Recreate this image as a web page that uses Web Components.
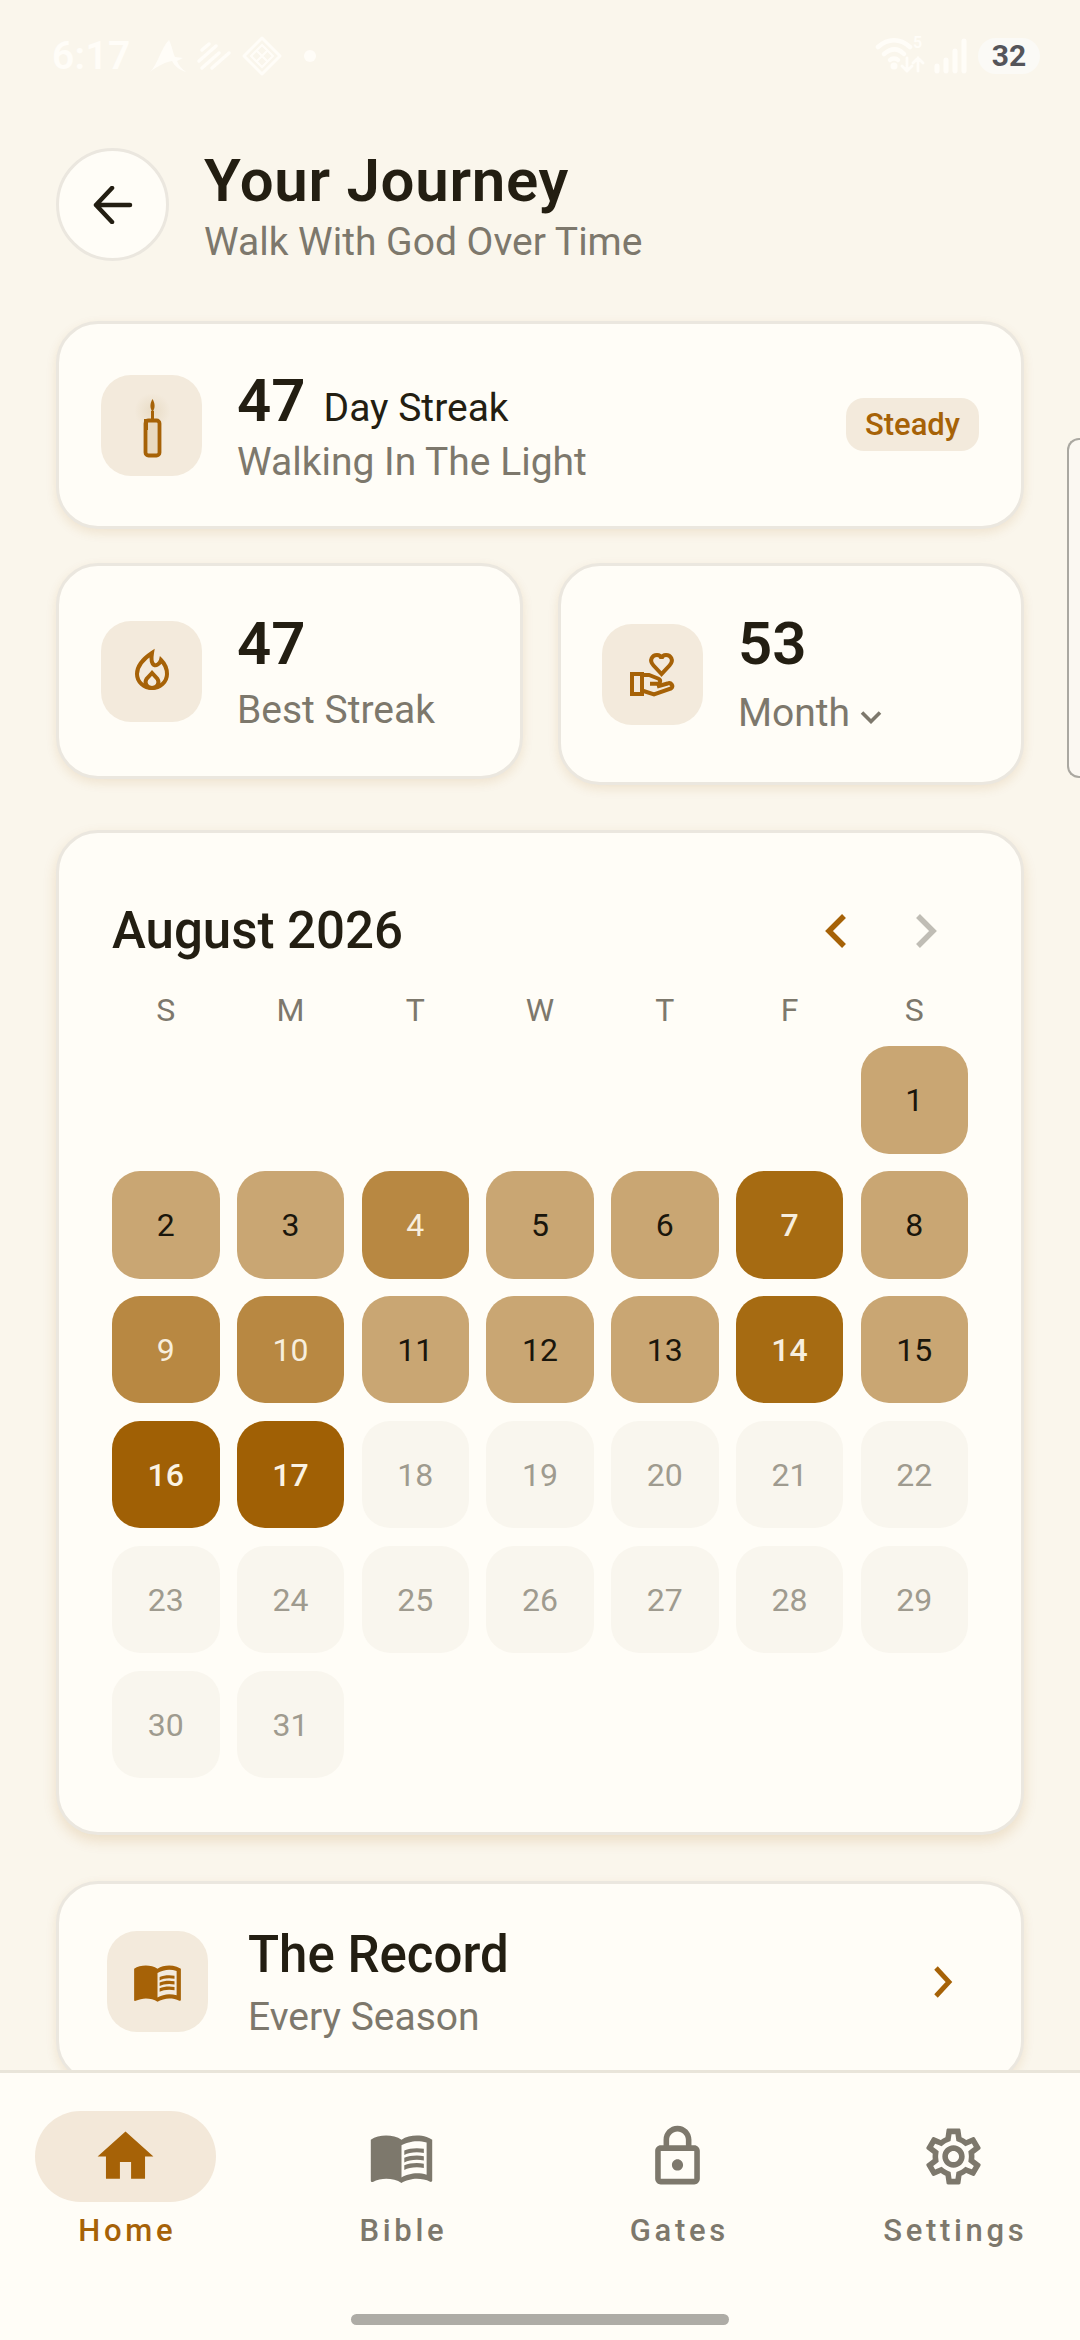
<!DOCTYPE html>
<html lang="en">
<head>
<meta charset="utf-8">
<title>Your Journey</title>
<style>
html,body{margin:0;padding:0;background:#faf6ec}
</style>
</head>
<body>
<app-shell>
  <status-bar slot="status"></status-bar>
  <page-header><span slot="title">Your Journey</span><span slot="sub">Walk With God Over Time</span></page-header>
  <section-stack>
    <stat-card variant="wide">
      <icon-tile slot="icon"><svg viewBox="0 0 100 100" width="100" height="100"><defs><radialGradient id="glow"><stop offset="0" stop-color="#e9dcc6"/><stop offset="1" stop-color="#e9dcc6" stop-opacity="0"/></radialGradient></defs><circle cx="50.500" cy="36" r="18" fill="url(#glow)"/><rect x="43.500" y="45.500" width="14" height="35" rx="3" fill="#e8d9c0" stroke="#a66207" stroke-width="3.800"/><rect x="42" y="44" width="4" height="11" fill="#a66207"/><path d="M50.500 24c2.500 4 3 9 0 13c-3-4-2.500-9 0-13z" fill="#a66207"/><rect x="49" y="36" width="3" height="9" fill="#a66207"/></svg></icon-tile>
      <span slot="value">47</span><span slot="unit">Day Streak</span>
      <span slot="label">Walking In The Light</span>
      <status-chip slot="end">Steady</status-chip>
    </stat-card>
    <stat-row>
      <stat-card>
        <icon-tile slot="icon"><svg viewBox="0 0 100 100" width="100" height="100" fill="none" stroke="#a66207" stroke-width="4" stroke-linejoin="miter"><path d="M50 32C41 38 35 45 35 53C35 61 42 67 50 67C58 67 65 61 65 53C65 47 63 43 59 39C58 43 54 45 52 44C49 42 49 38 50 32Z"/><path d="M50 52L44.500 58C42 62 45 67 50 67C55 67 58 62 55.500 58Z"/></svg></icon-tile>
        <span slot="value">47</span>
        <span slot="label">Best Streak</span>
      </stat-card>
      <stat-card variant="drop">
        <icon-tile slot="icon"><svg viewBox="0 0 100 100" width="100" height="100" fill="none" stroke="#a66207" stroke-width="4"><path d="M58.500 50L50.500 41.500C45.500 36 49.500 31 54 31C56 31 58 32.500 58.500 34.500C59 32.500 61 31 63 31C67.500 31 71.500 36 66.500 41.500Z"/><path d="M29 50H39V70H29Z"/><path d="M39 51H46L55 54.500C58.500 56 57.500 60 53.500 59.800H47"/><path d="M39 66.500L51 70.500L68 64.500C71 62 68 58 64.500 59.500L54 62.500"/></svg></icon-tile>
        <span slot="value">53</span>
        <span slot="label">Month<svg width="24" height="14" viewBox="0 0 24 14" fill="none" stroke="#7d786c" stroke-width="3.600" style="margin-left:9px;vertical-align:2px"><path d="M3 2.500L12 11.500L21 2.500"/></svg></span>
      </stat-card>
    </stat-row>
    <journey-calendar></journey-calendar>
    <record-card><span slot="title">The Record</span><span slot="sub">Every Season</span></record-card>
  </section-stack>
  <bottom-nav slot="nav">
    <nav-item icon="home" active>Home</nav-item>
    <nav-item icon="book">Bible</nav-item>
    <nav-item icon="lock">Gates</nav-item>
    <nav-item icon="gear">Settings</nav-item>
  </bottom-nav>
</app-shell>
<script>
const ACCENT='#a66207',INK='#231e12',MUTED='#7d786c';
const PATHS={
home:'M10 20v-6h4v6h5v-8h3L12 3 2 12h3v8z',
book:'M21 5c-1.11-.35-2.33-.5-3.5-.5-1.95 0-4.05.4-5.5 1.5-1.45-1.1-3.55-1.5-5.5-1.5S2.450 4.900 1 6v14.650c0 .25.25.5.5.5.1 0 .15-.05.25-.05C3.100 20.450 5.050 20 6.500 20c1.950 0 4.050.4 5.500 1.500 1.350-.85 3.800-1.500 5.500-1.500 1.650 0 3.350.3 4.750 1.050.1.05.15.05.25.05.25 0 .5-.25.5-.5V6c-.6-.45-1.250-.75-2-1zm0 13.500c-1.100-.35-2.300-.5-3.500-.5-1.700 0-4.150.65-5.500 1.500V8c1.350-.85 3.800-1.500 5.500-1.500 1.200 0 2.400.15 3.500.5v11.500zM17.500 10.500c.88 0 1.730.09 2.500.26V9.240c-.79-.15-1.640-.24-2.500-.24-1.700 0-3.240.29-4.500.83v1.660c1.130-.64 2.700-.99 4.500-.99zM13 12.490v1.660c1.130-.64 2.700-.99 4.500-.99.88 0 1.730.09 2.500.26V11.900c-.79-.15-1.640-.24-2.500-.24-1.700 0-3.240.3-4.500.83zM17.500 14.330c-1.700 0-3.240.29-4.500.83v1.660c1.130-.64 2.700-.99 4.500-.99.88 0 1.730.09 2.500.26v-1.520c-.79-.16-1.640-.24-2.500-.24z',
lock:'M18 8h-1V6c0-2.760-2.240-5-5-5S7 3.240 7 6v2H6c-1.100 0-2 .9-2 2v10c0 1.100.9 2 2 2h12c1.100 0 2-.9 2-2V10c0-1.100-.9-2-2-2zM9 6c0-1.660 1.340-3 3-3s3 1.340 3 3v2H9V6zm9 14H6V10h12v10zm-6-3c1.100 0 2-.9 2-2s-.9-2-2-2-2 .9-2 2 .9 2 2 2z',
gear:'M19.430 12.980c.04-.32.07-.64.07-.98 0-.34-.03-.66-.07-.98l2.110-1.650c.19-.15.24-.42.12-.64l-2-3.460c-.09-.16-.26-.25-.44-.25-.06 0-.12.01-.17.03l-2.490 1c-.52-.4-1.080-.73-1.690-.98l-.38-2.650C14.460 2.180 14.250 2 14 2h-4c-.25 0-.46.18-.49.42l-.38 2.650c-.61.25-1.170.59-1.690.98l-2.490-1c-.06-.02-.12-.03-.18-.03-.17 0-.34.09-.43.25l-2 3.460c-.13.22-.07.49.12.64l2.110 1.650c-.04.32-.07.65-.07.98 0 .33.03.66.07.98l-2.110 1.650c-.19.15-.24.42-.12.64l2 3.460c.09.16.26.25.44.25.06 0 .12-.01.17-.03l2.490-1c.52.4 1.080.73 1.690.98l.38 2.650c.03.24.24.42.49.42h4c.25 0 .46-.18.49-.42l.38-2.650c.61-.25 1.170-.59 1.690-.98l2.490 1c.06.02.12.03.18.03.17 0 .34-.09.43-.25l2-3.460c.12-.22.07-.49-.12-.64l-2.110-1.650zm-1.980-1.710c.04.31.05.52.05.73 0 .21-.02.43-.05.73l-.14 1.130.89.7 1.080.84-.7 1.210-1.270-.51-1.040-.42-.9.68c-.43.32-.84.56-1.250.73l-1.060.43-.16 1.130-.2 1.350h-1.400l-.19-1.350-.16-1.130-1.060-.43c-.43-.18-.83-.41-1.230-.71l-.91-.7-1.060.43-1.270.51-.7-1.210 1.080-.84.89-.7-.14-1.130c-.03-.31-.05-.54-.05-.74s.02-.43.05-.73l.14-1.130-.89-.7-1.080-.84.7-1.210 1.270.51 1.040.42.9-.68c.43-.32.84-.56 1.250-.73l1.060-.43.16-1.130.2-1.350h1.390l.19 1.350.16 1.130 1.060.43c.43.18.83.41 1.230.71l.91.7 1.060-.43 1.270-.51.7 1.210-1.070.85-.89.7.14 1.130zM12 8c-2.210 0-4 1.790-4 4s1.790 4 4 4 4-1.790 4-4-1.790-4-4-4zm0 6c-1.100 0-2-.9-2-2s.9-2 2-2 2 .9 2 2-.9 2-2 2z'
};
function svgIcon(name,size,color){return `<svg width="${size}" height="${size}" viewBox="0 0 24 24" fill="${color}" style="display:block"><path d="${PATHS[name]}"/></svg>`}
function def(tag,css,html,extra){
  const t=document.createElement('template');
  t.innerHTML=`<style>${css}</style>${html}`;
  class C extends HTMLElement{
    constructor(){super();this.attachShadow({mode:'open'}).appendChild(t.content.cloneNode(true));}
    connectedCallback(){if(extra)extra.call(this,this.shadowRoot)}
  }
  customElements.define(tag,C);
}
const cardCss=`background:#fffdf7;border:3px solid #ebe7df;box-sizing:border-box;box-shadow:0 4px 11px rgba(166,98,7,.12);`;

def('app-shell',`
:host{display:flex;flex-direction:column;width:1080px;height:2340px;overflow:hidden;position:relative;background:#faf6ec;font-family:Roboto,"Liberation Sans",sans-serif;color:${INK}}
main{flex:1;min-height:0;overflow:hidden;display:flex;flex-direction:column;padding:34px 56px 0}
.handle{position:absolute;right:0;top:438px;width:13px;height:340px;box-sizing:border-box;border:2px solid #aaa8a1;border-right:0;border-radius:12px 0 0 12px;background:#fbf8f2}
`,`<slot name="status"></slot><main><slot></slot></main><slot name="nav"></slot><div class="handle"></div>`);

def('status-bar',`
:host{display:flex;align-items:center;justify-content:space-between;height:112px;padding:0 40px 0 52px;box-sizing:border-box;flex:none;color:#fffdf8}
.l,.r{display:flex;align-items:center}
.t{font-size:39px;font-weight:600;letter-spacing:.3px;line-height:46px}
.l svg{margin-left:14px;display:block}
.r svg{display:block}
.rwrap{position:relative;width:93px;height:40px}
.five{position:absolute;left:38px;top:-2px;font-size:16px;line-height:18px;font-weight:600}
.pill{margin-left:10px;width:62px;height:36px;border-radius:18px;background:#fbfaf6;color:#55555a;font-size:30px;font-weight:700;line-height:36px;text-align:center}
`,`<div class="l"><span class="t">6:17</span>
<svg width="176" height="42" viewBox="0 0 176 42" fill="none" stroke="#fffdf8"><path d="M5 37C13 29 16 13 24 5C27 11 28 18 30 22L38 23L32 26C34 31 37 34 41 37C35 35 30 32 27 26C21 27 12 31 5 37Z" fill="#fffdf8" stroke="none"/><path d="M57 14l7-6M54 25l17-15M57 32l17-15M67 32l17-15" stroke-width="3.500" stroke-linecap="round" transform="translate(0,1)"/><path d="M117 3L135 21L117 39L99 21Z" stroke-width="3" stroke-linejoin="round"/><path d="M117 10L128 21L117 32L106 21Z" stroke-width="2"/><path d="M111 15L123 27M123 15L111 27" stroke-width="2"/><circle cx="165" cy="21" r="6" fill="#fffdf8" stroke="none"/></svg></div>
<div class="r"><div class="rwrap"><svg width="93" height="40" viewBox="0 0 93 40" fill="none" stroke="#fffdf8" stroke-linecap="round"><path d="M3 11C13 2 25 2 35 11" stroke-width="4.500"/><path d="M9 18C16 12 23 12 29 18" stroke-width="4.500"/><path d="M15 24C17 22 21 22 23 24" stroke-width="4.500"/><circle cx="19" cy="30" r="3.500" fill="#fffdf8" stroke="none"/><path d="M32 22V35M27 30L32 35L37 30M43 35V22M38 27L43 22L48 27" stroke-width="2.800"/><path d="M62 30V35M71 24V35M80 15V35M89 5V35" stroke-width="5"/></svg><span class="five">5</span></div><div class="pill">32</div></div>`);

def('page-header',`
:host{display:flex;align-items:flex-start;gap:35px;flex:none}
button{all:unset;box-sizing:border-box;flex:none;width:113px;height:113px;margin-top:2px;border-radius:50%;background:#fffdf7;border:3px solid #ebe7df;display:flex;align-items:center;justify-content:center}
.h{font-size:60px;font-weight:600;line-height:70px;letter-spacing:.7px;color:${INK}}
.s{font-size:39px;line-height:46px;margin-top:3px;color:${MUTED}}
`,`<button aria-label="Back"><svg width="40" height="38" viewBox="0 0 40 38" fill="none" stroke="${INK}" stroke-width="4.500" stroke-linecap="round" stroke-linejoin="round"><path d="M37 19H3M19 2L3 19L19 36"/></svg></button>
<div><div class="h"><slot name="title"></slot></div><div class="s"><slot name="sub"></slot></div></div>`);

def('section-stack',`:host{display:block;margin-top:56px}`,`<slot></slot>`);
def('stat-row',`:host{display:grid;grid-template-columns:1fr 1fr;gap:35px;align-items:start;margin-top:34px}`,`<slot></slot>`);

def('stat-card',`
:host{display:flex;align-items:center;gap:35px;${cardCss}border-radius:42px;padding:43px 42px}
:host([variant=wide]){padding:41px 42px}
:host([variant=drop]){padding-left:41.5px}
.tx{flex:1;min-width:0}
.top{display:flex;align-items:baseline;gap:18px}
:host([variant=wide]) .top{padding-top:1px}
.v{font-size:60px;font-weight:600;line-height:70px;color:${INK}}
.u{font-size:39px;line-height:44px;color:${INK}}
.l{font-size:39px;line-height:46px;color:${MUTED};margin-top:8px}
:host([variant=wide]) .l{margin-top:3px}
:host([variant=drop]) .l{padding:3px 0;margin-top:8px}
`,`<slot name="icon"></slot><div class="tx"><div class="top"><span class="v"><slot name="value"></slot></span><span class="u"><slot name="unit"></slot></span></div><div class="l"><slot name="label"></slot></div></div><slot name="end"></slot>`);

def('icon-tile',`:host{display:block;flex:none;width:101px;height:101px;border-radius:30px;background:#f3eadc;box-sizing:border-box}
.w{width:100%;height:100%;display:flex;align-items:center;justify-content:center}`,`<div class="w"><slot></slot></div>`);

def('status-chip',`:host{display:block;flex:none;background:#f3eadc;color:${ACCENT};font-size:31px;font-weight:500;line-height:53px;height:53px;padding:0 19px;border-radius:18px;margin-top:-2px}`,`<slot></slot>`);

def('day-cell',`
:host{display:flex;align-items:center;justify-content:center;aspect-ratio:1;border-radius:28px;font-size:32px;font-weight:450;line-height:1}
:host([k=a]){background:#c9a673;color:#1a160c}
:host([k=b]){background:#b88842;color:#f7eedd;font-weight:400}
:host([k=c]){background:#a66b12;color:#f7eedd;font-weight:500}
:host([k=d]){background:#a06005;color:#fbf3e3;font-weight:500}
:host([k=f]){background:#f9f6ee;color:#9f9b8f;font-weight:400}
:host([k=e]){background:transparent}
`,`<slot></slot>`);

def('journey-calendar',`
:host{display:block;${cardCss}border-radius:42px;padding:53px 53px 54px;margin-top:45px;box-shadow:0 6px 14px rgba(166,98,7,.16)}
.hd{display:flex;align-items:center;justify-content:space-between;height:90px}
h2{margin:0;font-size:51px;font-weight:500;color:${INK};line-height:60px}
.nav{display:flex;gap:68px;margin-right:31px}
svg{display:block}
.g{display:grid;grid-template-columns:repeat(7,1fr);column-gap:17.2px}
.w{margin-top:15px;font-size:32px;line-height:39px;color:${MUTED};text-align:center}
.d{margin-top:16px;row-gap:17.4px}
`,`<div class="hd"><h2>August 2026</h2><div class="nav"><svg width="22" height="34" viewBox="0 0 22 34" fill="none" stroke="${ACCENT}" stroke-width="5.500"><path d="M19 2L4 17L19 32"/></svg><svg width="22" height="34" viewBox="0 0 22 34" fill="none" stroke="#c0bdb5" stroke-width="5.500"><path d="M3 2L18 17L3 32"/></svg></div></div>
<div class="g w"><span>S</span><span>M</span><span>T</span><span>W</span><span>T</span><span>F</span><span>S</span></div><div class="g d" id="d"></div>`,function(r){
  const g=r.getElementById('d');if(g.children.length)return;
  const map={4:'b',9:'b',10:'b',7:'c',14:'c',16:'d',17:'d'};
  for(let i=0;i<6;i++){const c=document.createElement('day-cell');c.setAttribute('k','e');g.appendChild(c)}
  for(let n=1;n<=31;n++){const c=document.createElement('day-cell');c.setAttribute('k',n>17?'f':(map[n]||'a'));c.textContent=n;g.appendChild(c)}
});

def('record-card',`
:host{display:flex;align-items:center;gap:40px;${cardCss}border-radius:42px;padding:39px 68px 40px 48px;margin-top:46px}
.tx{flex:1}
.h{font-size:51px;font-weight:500;line-height:63px;color:${INK}}
.s{font-size:39px;line-height:46px;margin-top:8px;color:${MUTED}}
svg{display:block}
`,`<icon-tile id="i"></icon-tile><div class="tx"><div class="h"><slot name="title"></slot></div><div class="s"><slot name="sub"></slot></div></div><svg width="20" height="32" viewBox="0 0 20 32" fill="none" stroke="${ACCENT}" stroke-width="4.800"><path d="M3 2L16 16L3 30"/></svg>`,function(r){
  const t=r.getElementById('i');if(!t.innerHTML)t.innerHTML=svgIcon('book',51,ACCENT);
});

def('bottom-nav',`
:host{display:flex;flex-direction:column;flex:none;height:270px;box-sizing:border-box;background:#fffdf7;border-top:3px solid #e9e5da;position:relative;z-index:1}
.row{display:grid;grid-template-columns:repeat(4,181px);justify-content:space-between;padding:38px 36px 0 35px}
.bar{width:378px;height:11px;border-radius:6px;background:#aeaca6;margin:auto auto 15px}
`,`<div class="row"><slot></slot></div><div class="bar"></div>`);

def('nav-item',`
:host{display:flex;flex-direction:column;align-items:center;color:${MUTED}}
:host([active]){color:${ACCENT}}
.p{width:181px;height:91px;border-radius:46px;display:flex;align-items:center;justify-content:center}
:host([active]) .p{background:#f3e8d9}
.t{margin-top:11px;font-size:31px;font-weight:475;line-height:35px;letter-spacing:3.700px;padding-left:3.700px;white-space:nowrap}
:host([active]) .t{font-weight:500}
`,`<div class="p" id="p"></div><div class="t"><slot></slot></div>`,function(r){
  const col=this.hasAttribute('active')?ACCENT:MUTED;
  r.getElementById('p').innerHTML=svgIcon(this.getAttribute('icon'),67,col);
});
</script>
</body>
</html>
